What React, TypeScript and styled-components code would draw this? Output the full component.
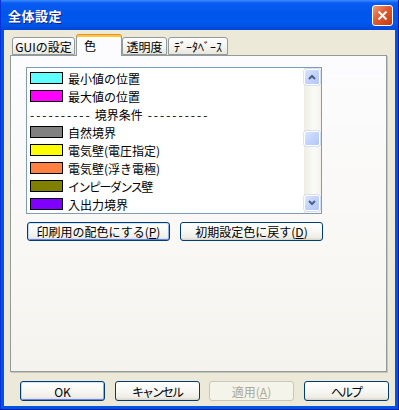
import React from "react";
import styled, { createGlobalStyle } from "styled-components";

const GlobalStyle = createGlobalStyle`
  html, body {
    margin: 0;
    padding: 0;
    background: #ece9d8;
  }
  body {
    font-family: "Noto Sans CJK JP", "Liberation Sans", sans-serif;
    font-size: 12px;
    color: #000;
  }
`;

const Window = styled.div`
  width: 399px;
  height: 410px;
  display: flex;
  flex-direction: column;
  background: #0054e3;
  box-sizing: border-box;
  border-left: 1px solid #0831d9;
  border-right: 1px solid #001ea0;
  border-bottom: 1px solid #001ea0;
`;

const TitleBar = styled.div`
  height: 30px;
  flex: none;
  display: flex;
  align-items: center;
  justify-content: space-between;
  padding: 0 5px 0 7px;
  background: linear-gradient(
    to bottom,
    #3c8cff 0%,
    #0a5cf0 10%,
    #0055ea 45%,
    #0058ee 75%,
    #0048d8 100%
  );
`;

const Title = styled.span`
  color: #fff;
  font-weight: bold;
  font-size: 13px;
  letter-spacing: 0.5px;
  text-shadow: 1px 1px 0 #0f1f8a;
`;

const CloseButton = styled.div`
  width: 21px;
  height: 21px;
  box-sizing: border-box;
  border: 1px solid #fff;
  border-radius: 3px;
  background: linear-gradient(135deg, #f09a78 0%, #e05a30 45%, #c23a10 100%);
  display: flex;
  align-items: center;
  justify-content: center;
`;

const Client = styled.div`
  flex: 1;
  margin: 0 3px 3px 3px;
  background: #ece9d8;
  display: flex;
  flex-direction: column;
`;

const TabRow = styled.div`
  height: 20px;
  padding: 5px 0 0 8px;
  display: flex;
  align-items: flex-end;
  position: relative;
  z-index: 1;
`;

const Tab = styled.div<{ $w: number; $active?: boolean }>`
  width: ${(p) => p.$w}px;
  flex: none;
  height: ${(p) => (p.$active ? 21 : 18)}px;
  margin-bottom: ${(p) => (p.$active ? -1 : 0)}px;
  box-sizing: border-box;
  border: 1px solid #919b9c;
  border-bottom: ${(p) => (p.$active ? "none" : "1px solid #919b9c")};
  border-top: ${(p) => (p.$active ? "2px solid #ffc83c" : "1px solid #919b9c")};
  box-shadow: ${(p) => (p.$active ? "0 -1px 0 #e68b2c" : "none")};
  border-radius: 3px 3px 0 0;
  background: ${(p) =>
    p.$active
      ? "#fcfcfe"
      : "linear-gradient(to bottom, #fefefe 0%, #f4f3ee 60%, #e8e6dc 100%)"};
  display: flex;
  align-items: center;
  justify-content: ${(p) => (p.$active ? "flex-start" : "center")};
  padding-left: ${(p) => (p.$active ? 7 : 0)}px;
  padding-bottom: ${(p) => (p.$active ? 3 : 0)}px;
  font-size: 12px;
  white-space: nowrap;
  overflow: hidden;
  margin-right: ${(p) => (p.$active ? 0 : 1)}px;
`;

const Panel = styled.div`
  margin-left: 6px;
  width: 377px;
  height: 317px;
  box-sizing: border-box;
  border: 1px solid #919b9c;
  box-shadow: 1px 1px 0 #c8c6bb;
  background: linear-gradient(to bottom, #fcfcfe 0%, #f8f7f3 70%, #f4f3ee 100%);
  padding: 11px 0 0 15px;
  display: flex;
  flex-direction: column;
`;

const ListBox = styled.div`
  width: 296px;
  height: 147px;
  box-sizing: border-box;
  border: 1px solid #7f9db9;
  background: #fff;
  display: flex;
`;

const Items = styled.div`
  flex: 1;
  padding: 1px 0 0 3px;
  overflow: hidden;
`;

const Row = styled.div`
  height: 18px;
  display: flex;
  align-items: center;
  white-space: nowrap;
`;

const Dashes = styled.span<{ $after?: boolean }>`
  letter-spacing: 2px;
  margin: ${(p) => (p.$after ? "0 0 0 5px" : "0 3px 0 0")};
`;

/* katakana set narrower, like the proportional UI font of the original */
const Narrow = styled.span<{ $ls: number }>`
  letter-spacing: ${(p) => p.$ls}px;
`;

const Swatch = styled.div<{ $color: string }>`
  width: 33px;
  height: 12px;
  box-sizing: border-box;
  border: 1px solid #000;
  background: ${(p) => p.$color};
  margin-right: 5px;
  flex: none;
`;

const ScrollBar = styled.div`
  width: 17px;
  display: flex;
  flex-direction: column;
  background: linear-gradient(to right, #eeede5, #fbfbf8 60%, #f3f1ec);
  padding: 1px 0;
  box-sizing: border-box;
`;

const ScrollButton = styled.div`
  height: 16px;
  width: 16px;
  box-sizing: border-box;
  border: 1px solid #fff;
  border-radius: 2px;
  box-shadow: 0 0 0 0.5px #b5c8f3;
  background: linear-gradient(135deg, #dbe6fe 0%, #c2d3fc 50%, #b4c8f6 100%);
  display: flex;
  align-items: center;
  justify-content: center;
`;

const Track = styled.div<{ $size: number }>`
  height: ${(p) => p.$size}px;
  flex: none;
`;

const Thumb = styled(ScrollButton)`
  height: 15px;
`;

const ButtonRow = styled.div<{ $gap: number; $pad: number; $top?: number }>`
  display: flex;
  gap: ${(p) => p.$gap}px;
  padding-left: ${(p) => p.$pad}px;
  margin-top: ${(p) => p.$top ?? 0}px;
`;

const Button = styled.div<{ $w: number; $h: number; $default?: boolean; $disabled?: boolean }>`
  width: ${(p) => p.$w}px;
  height: ${(p) => p.$h}px;
  box-sizing: border-box;
  border: 1px solid ${(p) => (p.$disabled ? "#c9c7ba" : "#003c74")};
  border-radius: 3px;
  background: ${(p) =>
    p.$disabled
      ? "#f5f4ea"
      : "linear-gradient(to bottom, #ffffff 0%, #f7f7f4 50%, #eeede6 85%, #d8d3c8 100%)"};
  box-shadow: ${(p) =>
    p.$default
      ? "inset 0 1px 0 #cee7ff, inset 1px 0 0 #bcd4f6, inset -1px 0 0 #89adf0, inset 0 -1px 0 #6982ee"
      : "none"};
  color: ${(p) => (p.$disabled ? "#aca899" : "#000")};
  display: flex;
  align-items: center;
  justify-content: center;
  font-size: 12px;
  white-space: nowrap;
`;

const Key = styled.span`
  text-decoration: underline;
`;

const Arrow = ({ up }: { up?: boolean }) => (
  <svg width="8" height="6" viewBox="0 0 8 6">
    <polyline
      points={up ? "1,5 4,2 7,5" : "1,1 4,4 7,1"}
      fill="none"
      stroke="#4d6185"
      strokeWidth="2"
    />
  </svg>
);

const items: { color?: string; label: React.ReactNode; key: string }[] = [
  { key: "min", color: "#60ffff", label: "最小値の位置" },
  { key: "max", color: "#ff00ff", label: "最大値の位置" },
  { key: "sep", label: "境界条件" },
  { key: "nat", color: "#808080", label: "自然境界" },
  { key: "ev", color: "#ffff00", label: "電気壁(電圧指定)" },
  { key: "ef", color: "#ff8040", label: "電気壁(浮き電極)" },
  {
    key: "imp",
    color: "#808000",
    label: (
      <>
        <Narrow $ls={-1.5}>インピーダンス</Narrow>壁
      </>
    ),
  },
  { key: "io", color: "#8000ff", label: "入出力境界" },
];

export default function App() {
  return (
    <>
      <GlobalStyle />
      <Window>
        <TitleBar>
          <Title>全体設定</Title>
          <CloseButton>
            <svg width="11" height="11" viewBox="0 0 11 11">
              <path d="M1.5 1.5 L9.5 9.5 M9.5 1.5 L1.5 9.5" stroke="#fff" strokeWidth="2" />
            </svg>
          </CloseButton>
        </TitleBar>
        <Client>
          <TabRow>
            <Tab $w={63}>GUIの設定</Tab>
            <Tab $w={46} $active>
              色
            </Tab>
            <Tab $w={45}>透明度</Tab>
            <Tab $w={60}>ﾃﾞｰﾀﾍﾞｰｽ</Tab>
          </TabRow>
          <Panel>
            <ListBox>
              <Items>
                {items.map((it) => (
                  <Row key={it.key}>
                    {it.color ? (
                      <>
                        <Swatch $color={it.color} />
                        {it.label}
                      </>
                    ) : (
                      <>
                        <Dashes>----------</Dashes>
                        {it.label}
                        <Dashes $after>----------</Dashes>
                      </>
                    )}
                  </Row>
                ))}
              </Items>
              <ScrollBar>
                <ScrollButton>
                  <Arrow up />
                </ScrollButton>
                <Track $size={46} />
                <Thumb />
                <Track $size={49} />
                <ScrollButton>
                  <Arrow />
                </ScrollButton>
              </ScrollBar>
            </ListBox>
            <ButtonRow $gap={10} $pad={1} $top={8}>
              <Button $w={143} $h={19} $default>
                印刷用の配色にする(<Key>P</Key>)
              </Button>
              <Button $w={143} $h={19}>
                初期設定色に戻す(<Key>D</Key>)
              </Button>
            </ButtonRow>
          </Panel>
          <ButtonRow $gap={9.5} $pad={16} $top={9}>
            <Button $w={85} $h={20} $default>
              OK
            </Button>
            <Button $w={85} $h={20}>
              <Narrow $ls={-2}>キャンセル</Narrow>
            </Button>
            <Button $w={85} $h={20} $disabled>
              適用(<Key>A</Key>)
            </Button>
            <Button $w={85} $h={20}>
              <Narrow $ls={-2}>ヘルプ</Narrow>
            </Button>
          </ButtonRow>
        </Client>
      </Window>
    </>
  );
}
